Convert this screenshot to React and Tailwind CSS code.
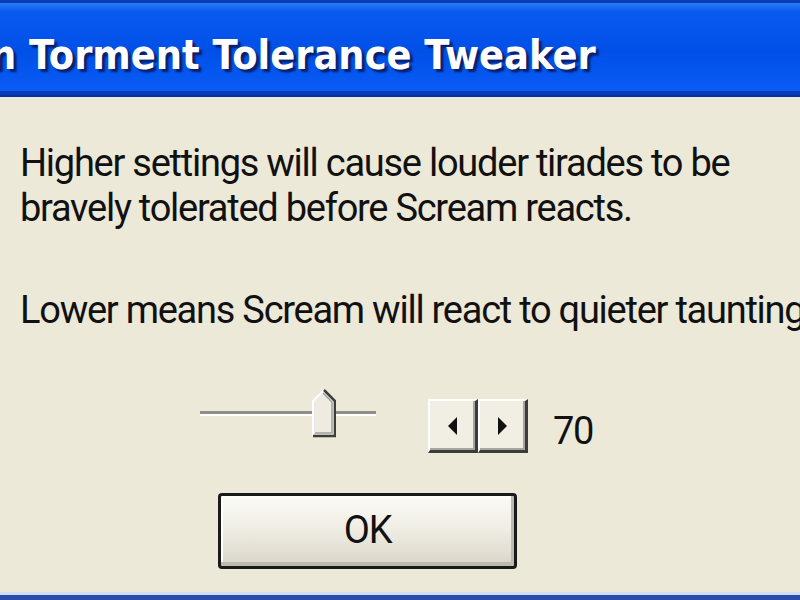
export default function App() {
  const body = { fontFamily: 'Roboto, "DejaVu Sans", sans-serif' };
  const btn =
    "w-[50px] h-[54px] flex items-center justify-center bg-[#F1EFE4] border-t-2 border-l-2 border-t-white border-l-white border-b-[3px] border-r-[3px] border-b-[#3c3c3c] border-r-[#3c3c3c] shadow-[inset_-2px_-2px_0_#a8a69c]";
  return (
    <div className="w-[800px] h-[600px] overflow-hidden flex flex-col bg-[#ECE9D8]">
      <div className="h-[97px] relative overflow-hidden flex flex-col">
        <div className="h-[3px] bg-[#0a3bb8]" />
        <div className="h-[8px] bg-gradient-to-b from-[#2a7cf5] to-[#0b5cf0]" />
        <div className="flex-1 flex items-center bg-gradient-to-b from-[#0b5af0] via-[#0050e8] to-[#0a5cf5]">
          <span
            className="whitespace-nowrap text-white font-bold text-[41px] leading-none ml-[-10px] mt-[8px] [text-shadow:3px_3px_2px_#0a1f6a]"
            style={{ fontFamily: '"DejaVu Sans Condensed", "DejaVu Sans", sans-serif', fontStretch: "condensed" }}
          >
            n Torment Tolerance Tweaker
          </span>
        </div>
        <div className="h-[4px] bg-[#0a3bb8]" />
        <div className="h-[2px] bg-[#0830a0]" />
      </div>
      <div className="flex-1 flex flex-col pl-[20px] pt-[44px] text-[38px] leading-[45px] tracking-[-1.25px] text-[#111] whitespace-nowrap" style={body}>
        <div>Higher settings will cause louder tirades to be</div>
        <div>bravely tolerated before Scream reacts.</div>
        <div className="mt-[57px]">Lower means Scream will react to quieter taunting.</div>
        <div className="flex items-start mt-[56px] ml-[180px]">
          <div className="relative w-[176px] h-[49px]">
            <div className="absolute left-0 right-0 top-[22px] h-[3px] bg-[#8f8d84]" />
            <div className="absolute left-0 right-0 top-[25px] h-[2px] bg-[#ffffff]" />
            <svg className="absolute left-[112px] top-0" width="24" height="49" viewBox="0 0 24 49">
              <polygon points="12,1 23,12 23,47 1,47 1,12" fill="#EEECE2" />
              <polyline points="1,47 1,12 12,1" fill="none" stroke="#ffffff" strokeWidth="2" />
              <polyline points="12,1 23,12 23,47 1,47" fill="none" stroke="#3c3c3c" strokeWidth="2.5" />
              <polyline points="11,4 20,13 20,44 3,44" fill="none" stroke="#a0a09a" strokeWidth="1.5" />
            </svg>
          </div>
          <div className="flex ml-[52px] mt-[10px]">
            <div className={btn}>
              <svg width="11" height="18" viewBox="0 0 11 18"><polygon points="10,0 1,9 10,18" fill="#111" /></svg>
            </div>
            <div className={btn}>
              <svg width="11" height="18" viewBox="0 0 11 18"><polygon points="1,0 10,9 1,18" fill="#111" /></svg>
            </div>
          </div>
          <div className="ml-[25px] mt-[20px] leading-[45px]">70</div>
        </div>
        <div className="ml-[198px] mt-[39px] w-[299px] h-[76px] rounded-[4px] border-[3px] border-[#1a1a1a] bg-gradient-to-b from-[#fbfbf7] via-[#eeece2] to-[#d9d6c8] shadow-[inset_-3px_-4px_0_#bdbab0,inset_2px_2px_0_#ffffff] flex items-center justify-center">
          <span className="leading-none mt-[-2px]">OK</span>
        </div>
      </div>
      <div className="h-[3px] bg-[#cfe0f5]" />
      <div className="h-[5px] bg-[#2b4ea8]" />
    </div>
  );
}
